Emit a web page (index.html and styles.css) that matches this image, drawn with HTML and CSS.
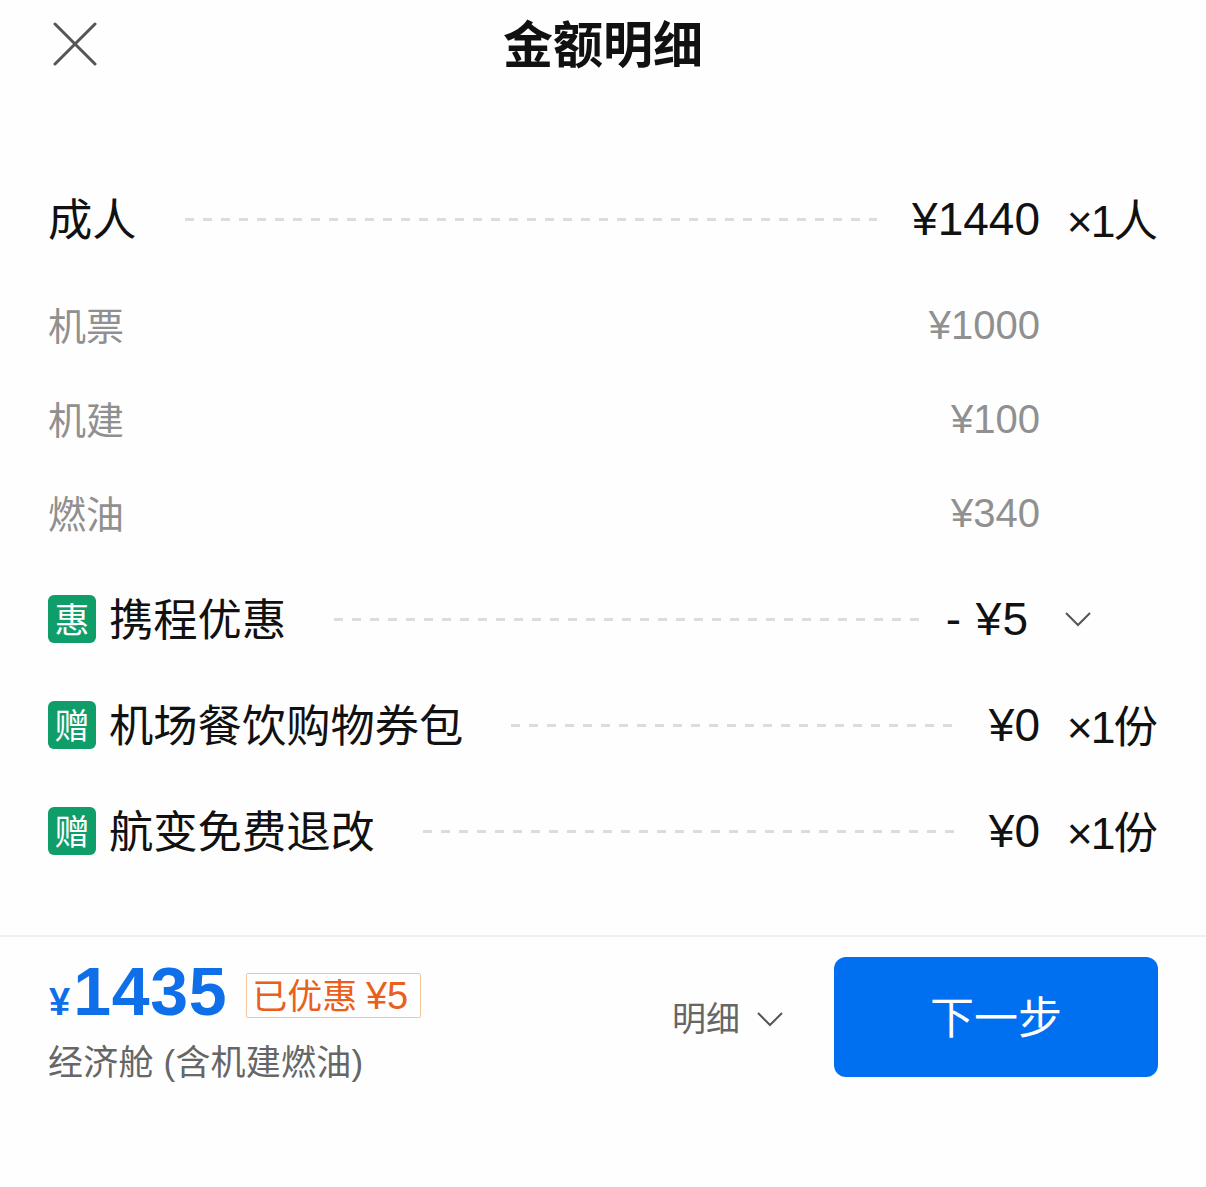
FILE: index.html
```html
<!DOCTYPE html>
<html lang="zh-CN">
<head>
<meta charset="utf-8">
<title>金额明细</title>
<link rel="stylesheet" href="styles.css">
</head>
<body>
<div class="page">
  <header class="header">
    <svg class="close" width="44" height="44" viewBox="0 0 44 44"><path d="M2 2L42 42M42 2L2 42"/></svg>
    <h1 class="title">金额明细</h1>
  </header>
  <main class="list">
    <div class="row">
      <span class="label">成人</span><span class="dash"></span>
      <span class="amount">¥1440</span><span class="unit">×1人</span>
    </div>
    <div class="group">
      <div class="sub"><span class="sub-label">机票</span><span class="sub-amount">¥1000</span></div>
      <div class="sub"><span class="sub-label">机建</span><span class="sub-amount">¥100</span></div>
      <div class="sub"><span class="sub-label">燃油</span><span class="sub-amount">¥340</span></div>
    </div>
    <div class="row">
      <span class="badge">惠</span><span class="label">携程优惠</span><span class="dash"></span>
      <span class="amount amount-off">- ¥5</span>
      <span class="unit unit-icon"><svg class="chev" width="28" height="16" viewBox="0 0 28 16"><path d="M2 2L14 14L26 2"/></svg></span>
    </div>
    <div class="row">
      <span class="badge">赠</span><span class="label">机场餐饮购物券包</span><span class="dash"></span>
      <span class="amount">¥0</span><span class="unit">×1份</span>
    </div>
    <div class="row">
      <span class="badge">赠</span><span class="label">航变免费退改</span><span class="dash"></span>
      <span class="amount">¥0</span><span class="unit">×1份</span>
    </div>
  </main>
  <footer class="footer">
    <div class="summary">
      <div class="price-line">
        <span class="price"><span class="yen">¥</span><span class="total">1435</span></span>
        <span class="tag">已优惠 <span class="tag-num">¥5</span></span>
      </div>
      <div class="cabin">经济舱 (含机建燃油)</div>
    </div>
    <div class="detail">
      <span>明细</span>
      <svg class="chev" width="28" height="16" viewBox="0 0 28 16"><path d="M2 2L14 14L26 2"/></svg>
    </div>
    <button class="next">下一步</button>
  </footer>
</div>
</body>
</html>
```
FILE: styles.css
```css
* { box-sizing: border-box; }
html, body { margin: 0; padding: 0; }
body {
  background: #fefefe;
  color: #111;
  font-family: "Liberation Sans", "Noto Sans CJK SC", sans-serif;
}
.page { width: 1206px; height: 1187px; overflow: hidden; }

.header {
  height: 88px;
  display: grid;
  grid-template-columns: 1fr auto 1fr;
  align-items: center;
  padding-left: 53px;
  padding-right: 53px;
}
.close { fill: none; stroke: #555; stroke-width: 3; stroke-linecap: round; }
.title { grid-column: 2; margin: 0; padding-top: 4px; font-size: 50px; line-height: 84px; font-weight: 700; color: #111; }

.list { padding: 78px 50px 51px 48px; }
.row { height: 106px; display: flex; align-items: center; font-size: 44.3px; }
.label { margin-right: 48px; padding-bottom: 4px; white-space: nowrap; }
.badge + .label { margin-left: -1px; }
.dash {
  flex: 1;
  height: 3px;
  background: repeating-linear-gradient(90deg, #dcdcdc 0 9px, transparent 9px 18px);
}
.amount { margin-left: 35px; font-size: 46px; white-space: nowrap; }
.amount-off { margin-left: 23px; margin-right: 11px; letter-spacing: 1px; }
.unit { width: 116px; padding-bottom: 4px; font-size: 44.5px; letter-spacing: -2px; text-align: right; white-space: nowrap; }
.unit-icon { display: flex; justify-content: flex-start; padding-left: 24px; padding-bottom: 0; }
.chev { fill: none; stroke: #555; stroke-width: 2; display: block; }

.badge {
  width: 48px;
  height: 48px;
  margin-right: 14px;
  flex: none;
  border-radius: 6px;
  background: #0f9d6a;
  color: #fff;
  font-size: 35px;
  line-height: 51px;
  text-align: center;
}

.group { padding: 6px 116px 6px 0; }
.sub {
  height: 94px;
  display: flex;
  align-items: center;
  justify-content: space-between;
  font-size: 38px;
  color: #909090;
}
.sub-label { padding-bottom: 4px; }
.sub-amount { font-size: 40px; }

.footer {
  border-top: 2px solid #f0f0f2;
  padding: 20px 48px 0;
  display: flex;
  align-items: flex-start;
}
.summary { flex: 1; }
.price-line { display: flex; align-items: center; height: 72px; }
.price { margin-bottom: 4px; color: #0f6fe8; white-space: nowrap; }
.yen { font-size: 38px; font-weight: 700; margin-right: 3px; margin-left: 1px; }
.total { font-size: 68px; font-weight: 700; line-height: 72px; letter-spacing: 0.7px; }
.tag {
  margin-left: 19px;
  margin-top: 5px;
  height: 45px;
  padding: 0 12px 0 5px;
  border: 1px solid #f5c49a;
  border-radius: 2px;
  color: #e8601c;
  font-size: 35px;
  line-height: 44px;
  word-spacing: -1px;
  white-space: nowrap;
}
.tag-num { font-size: 38px; }
.cabin { margin-top: 10px; font-size: 35px; letter-spacing: 0.2px; line-height: 48px; color: #666; white-space: nowrap; }
.detail {
  display: flex;
  align-items: center;
  gap: 16px;
  margin-top: 38px;
  margin-right: 50px;
  font-size: 34px;
  line-height: 48px;
  color: #666;
}
.next {
  width: 324px;
  height: 120px;
  padding: 0 0 4px;
  border: 0;
  border-radius: 12px;
  background: #006ff0;
  color: #fff;
  font-family: inherit;
  font-size: 44px;
  flex: none;
}
```
